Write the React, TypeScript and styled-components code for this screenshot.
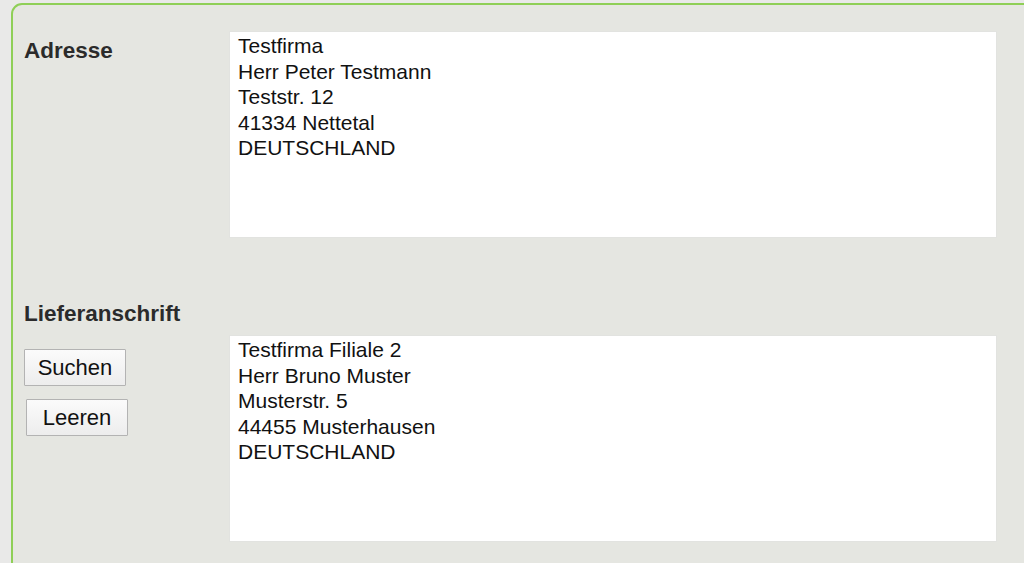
import React from "react";
import styled, { createGlobalStyle } from "styled-components";

const Global = createGlobalStyle`
  html, body {
    margin: 0;
    padding: 0;
    background: #e9e9e8;
    overflow: hidden;
    font-family: "Liberation Sans", Arial, sans-serif;
  }
`;

const Panel = styled.div`
  margin: 3px 0 0 11px;
  width: 1040px;
  height: 600px;
  box-sizing: border-box;
  border: 2px solid #8fcf57;
  border-radius: 11px;
  background: #e5e6e1;
  padding: 26px 0 0 11px;
`;

const Row = styled.div<{ $top?: number }>`
  display: flex;
  align-items: flex-start;
  margin-top: ${(p) => p.$top ?? 0}px;
`;

const LabelCol = styled.div`
  width: 205px;
  flex: none;
  display: flex;
  flex-direction: column;
  align-items: flex-start;
`;

const Label = styled.div<{ $pad?: number }>`
  font-weight: bold;
  font-size: 22.5px;
  line-height: 26px;
  color: #2b2b2b;
  padding-top: ${(p) => p.$pad ?? 0}px;
`;

const AddressBox = styled.div`
  width: 768px;
  height: 207px;
  box-sizing: border-box;
  background: #ffffff;
  border: 1px solid #e2e3e0;
  padding: 1px 8px 0;
  font-size: 21px;
  line-height: 25.6px;
  color: #111;
  white-space: pre;
`;

const Button = styled.button<{ $shift?: number; $top?: number }>`
  width: 102px;
  height: 37px;
  margin-left: ${(p) => p.$shift ?? 0}px;
  margin-top: ${(p) => p.$top ?? 0}px;
  box-sizing: border-box;
  border: 1px solid #b3b3b3;
  border-radius: 1px;
  background: linear-gradient(#fbfbfb, #ededed);
  font-family: "Liberation Sans", Arial, sans-serif;
  font-size: 22px;
  color: #111;
  padding: 0;
`;

export default function App() {
  return (
    <>
      <Global />
      <Panel>
        <Row>
          <LabelCol>
            <Label $pad={7}>Adresse</Label>
          </LabelCol>
          <AddressBox>
            {"Testfirma\nHerr Peter Testmann\nTeststr. 12\n41334 Nettetal\nDEUTSCHLAND"}
          </AddressBox>
        </Row>
        <Row $top={63}>
          <Label>Lieferanschrift</Label>
        </Row>
        <Row $top={8}>
          <LabelCol>
            <Button $top={14}>Suchen</Button>
            <Button $shift={2} $top={13}>Leeren</Button>
          </LabelCol>
          <AddressBox>
            {"Testfirma Filiale 2\nHerr Bruno Muster\nMusterstr. 5\n44455 Musterhausen\nDEUTSCHLAND"}
          </AddressBox>
        </Row>
      </Panel>
    </>
  );
}
